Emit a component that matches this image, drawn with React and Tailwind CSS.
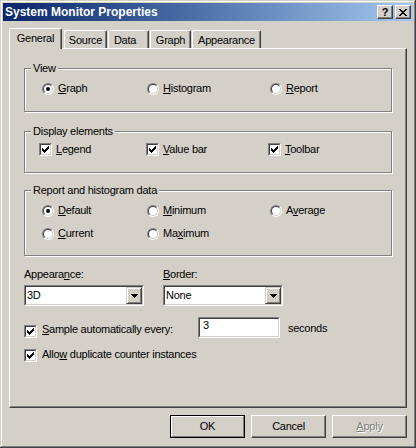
import React from "react";

function U({ children }) {
  return <span className="underline decoration-1 underline-offset-1">{children}</span>;
}

function Radio({ checked }) {
  return (
    <span className="flex w-[12px] h-[12px] shrink-0 rounded-full border border-t-[#808080] border-l-[#808080] border-b-white border-r-white">
      <span className="flex w-full h-full items-center justify-center rounded-full border border-t-[#404040] border-l-[#404040] border-b-[#d4d0c8] border-r-[#d4d0c8] bg-white">
        {checked && <span className="w-[4px] h-[4px] rounded-full bg-black" />}
      </span>
    </span>
  );
}

function Check({ checked }) {
  return (
    <span className="flex w-[13px] h-[13px] shrink-0 border border-t-[#808080] border-l-[#808080] border-b-white border-r-white">
      <span className="flex w-full h-full items-center justify-center border border-t-[#404040] border-l-[#404040] border-b-[#d4d0c8] border-r-[#d4d0c8] bg-white">
        {checked && (
          <svg width="7" height="7" viewBox="0 0 7 7" shapeRendering="crispEdges">
            <path
              fill="#000"
              d="M6 0h1v1h-1z M5 1h2v1h-2z M0 2h1v1h-1z M4 2h3v1h-3z M0 3h2v1h-2z M3 3h3v1h-3z M0 4h5v1h-5z M1 5h3v1h-3z M2 6h1v1h-1z"
            />
          </svg>
        )}
      </span>
    </span>
  );
}

function Opt({ type, checked, className, children }) {
  return (
    <div className={`flex items-center ${className}`}>
      <div className="flex w-[13px] h-[13px] items-center justify-center">
        {type === "radio" ? <Radio checked={checked} /> : <Check checked={checked} />}
      </div>
      <span className="ml-[4px] leading-[13px] whitespace-nowrap">{children}</span>
    </div>
  );
}

function Group({ label, className, children }) {
  return (
    <div className={`w-[368px] border border-[#808080] shadow-[inset_1px_1px_0_#fff,1px_1px_0_#fff] ${className}`}>
      <div className="-mt-[7px] ml-[6px] w-fit px-[2px] bg-[#d4d0c8] leading-[13px] whitespace-nowrap">{label}</div>
      {children}
    </div>
  );
}

function Sunken({ className, children }) {
  return (
    <div className={`border border-t-[#808080] border-l-[#808080] border-b-white border-r-white ${className}`}>
      <div className="flex w-full h-full border border-t-[#404040] border-l-[#404040] border-b-[#d4d0c8] border-r-[#d4d0c8] bg-white">
        {children}
      </div>
    </div>
  );
}

function Combo({ value }) {
  return (
    <Sunken className="w-[120px] h-[21px]">
      <span className="flex-1 pl-[1px] leading-[17px]">{value}</span>
      <div className="flex w-[16px] h-[17px] items-center justify-center bg-[#d4d0c8] border border-t-[#d4d0c8] border-l-[#d4d0c8] border-r-[#404040] border-b-[#404040] shadow-[inset_1px_1px_0_#fff,inset_-1px_-1px_0_#808080]">
        <svg width="7" height="4" viewBox="0 0 7 4" shapeRendering="crispEdges">
          <path fill="#000" d="M0 0h7v1h-7z M1 1h5v1h-5z M2 2h3v1h-3z M3 3h1v1h-1z" />
        </svg>
      </div>
    </Sunken>
  );
}

function Tab({ selected, className, children }) {
  if (selected) {
    return (
      <div className={`relative z-10 h-[21px] -mb-px flex justify-center pt-[3px] leading-[13px] bg-[#d4d0c8] border-l border-t border-r border-l-white border-t-white border-r-[#404040] rounded-t-[2px] shadow-[inset_-1px_0_0_#808080] ${className}`}>
        {children}
      </div>
    );
  }
  return (
    <div className={`h-[18px] flex justify-center pt-[3px] leading-[13px] bg-[#d4d0c8] border-l border-t border-r border-l-white border-t-white border-r-[#404040] rounded-t-[2px] shadow-[inset_-1px_0_0_#808080] ${className}`}>
      {children}
    </div>
  );
}

function Btn({ def, disabled, children }) {
  if (def) {
    return (
      <div className="w-[75px] h-[23px] border border-black">
        <div className="flex w-full h-full items-center justify-center border border-t-white border-l-white border-r-[#808080] border-b-[#808080]">
          {children}
        </div>
      </div>
    );
  }
  return (
    <div
      className={`flex w-[75px] h-[23px] items-center justify-center border border-t-white border-l-white border-r-[#404040] border-b-[#404040] shadow-[inset_-1px_-1px_0_#808080] ${
        disabled ? "text-[#808080] [text-shadow:1px_1px_0_#fff]" : ""
      }`}
    >
      {children}
    </div>
  );
}

export default function App() {
  return (
    <div className="w-[416px] h-[448px] bg-[#d4d0c8] p-[3px] text-[11px] tracking-[-0.25px] text-black font-['Liberation_Sans',Arial,sans-serif] shadow-[inset_-1px_-1px_0_#404040,inset_1px_1px_0_#d4d0c8,inset_-2px_-2px_0_#808080,inset_2px_2px_0_#fff] overflow-hidden">
      {/* Title bar */}
      <div className="flex h-[18px] items-center justify-between pl-[2px] pr-[2px] bg-linear-to-r from-[#0a246a] to-[#a6caf0]">
        <span className="text-white font-bold text-[12px] tracking-normal leading-[14px] whitespace-nowrap">System Monitor Properties</span>
        <div className="flex gap-[2px]">
          <div className="flex w-[16px] h-[14px] items-center justify-center bg-[#d4d0c8] border border-t-white border-l-white border-r-[#404040] border-b-[#404040] shadow-[inset_-1px_-1px_0_#808080]">
            <span className="font-bold text-[11px] tracking-normal leading-[11px]">?</span>
          </div>
          <div className="flex w-[16px] h-[14px] items-center justify-center bg-[#d4d0c8] border border-t-white border-l-white border-r-[#404040] border-b-[#404040] shadow-[inset_-1px_-1px_0_#808080]">
            <svg width="8" height="7" viewBox="0 0 8 7" shapeRendering="crispEdges">
              <path
                fill="#000"
                d="M0 0h2v1h-2z M6 0h2v1h-2z M1 1h2v1h-2z M5 1h2v1h-2z M2 2h4v1h-4z M3 3h2v1h-2z M2 4h4v1h-4z M1 5h2v1h-2z M5 5h2v1h-2z M0 6h2v1h-2z M6 6h2v1h-2z"
              />
            </svg>
          </div>
        </div>
      </div>

      {/* Tabs */}
      <div className="ml-[6px] mt-[7px] flex h-[20px] items-end gap-[1px]">
        <Tab selected className="w-[53px]">General</Tab>
        <Tab className="w-[43px] ml-px">Source</Tab>
        <Tab className="w-[41px] pr-[7px]">Data</Tab>
        <Tab className="w-[41px]">Graph</Tab>
        <Tab className="w-[69px]">Appearance</Tab>
      </div>

      {/* Panel */}
      <div className="ml-[6px] w-[398px] h-[360px] pt-[19px] pl-[14px] border border-t-white border-l-white border-r-[#404040] border-b-[#404040] shadow-[inset_-1px_-1px_0_#808080]">
        <Group label="View" className="h-[44px]">
          <div className="mt-[7px] flex pl-[16px]">
            <Opt type="radio" checked className="w-[105px]"><U>G</U>raph</Opt>
            <Opt type="radio" className="w-[123px]"><U>H</U>istogram</Opt>
            <Opt type="radio"><U>R</U>eport</Opt>
          </div>
        </Group>

        <Group label="Display elements" className="h-[42px] mt-[19px]">
          <div className="mt-[5px] flex pl-[14px]">
            <Opt type="check" checked className="w-[107px]"><U>L</U>egend</Opt>
            <Opt type="check" checked className="w-[122px]"><U>V</U>alue bar</Opt>
            <Opt type="check" checked><U>T</U>oolbar</Opt>
          </div>
        </Group>

        <Group label="Report and histogram data" className="h-[66px] mt-[17px]">
          <div className="mt-[7px] flex pl-[16px]">
            <Opt type="radio" checked className="w-[105px]"><U>D</U>efault</Opt>
            <Opt type="radio" className="w-[123px]"><U>M</U>inimum</Opt>
            <Opt type="radio">A<U>v</U>erage</Opt>
          </div>
          <div className="mt-[10px] flex pl-[16px]">
            <Opt type="radio" className="w-[105px]"><U>C</U>urrent</Opt>
            <Opt type="radio" className="w-[123px]">Ma<U>x</U>imum</Opt>
          </div>
        </Group>

        <div className="mt-[12px] flex">
          <div className="w-[139px]">
            <div className="leading-[13px]">Appeara<U>n</U>ce:</div>
            <div className="mt-[4px]"><Combo value="3D" /></div>
          </div>
          <div>
            <div className="leading-[13px]"><U>B</U>order:</div>
            <div className="mt-[4px]"><Combo value="None" /></div>
          </div>
        </div>

        <div className="mt-[11px] flex h-[21px] items-start">
          <div className="mt-[8px]"><Check checked /></div>
          <span className="ml-[5px] mt-[6px] w-[156px] leading-[13px] whitespace-nowrap"><U>S</U>ample automatically every:</span>
          <Sunken className="w-[82px] h-[21px]">
            <span className="pl-[3px] leading-[13px]">3</span>
          </Sunken>
          <span className="ml-[8px] mt-[5px] leading-[13px]">seconds</span>
        </div>

        <div className="mt-[10px] flex items-start">
          <div className="mt-[1px]"><Check checked /></div>
          <span className="ml-[5px] leading-[13px] whitespace-nowrap">Allo<U>w</U> duplicate counter instances</span>
        </div>
      </div>

      {/* Buttons */}
      <div className="ml-[6px] mt-[7px] flex w-[398px] justify-end gap-[6px]">
        <Btn def>OK</Btn>
        <Btn>Cancel</Btn>
        <Btn disabled><U>A</U>pply</Btn>
      </div>
    </div>
  );
}
